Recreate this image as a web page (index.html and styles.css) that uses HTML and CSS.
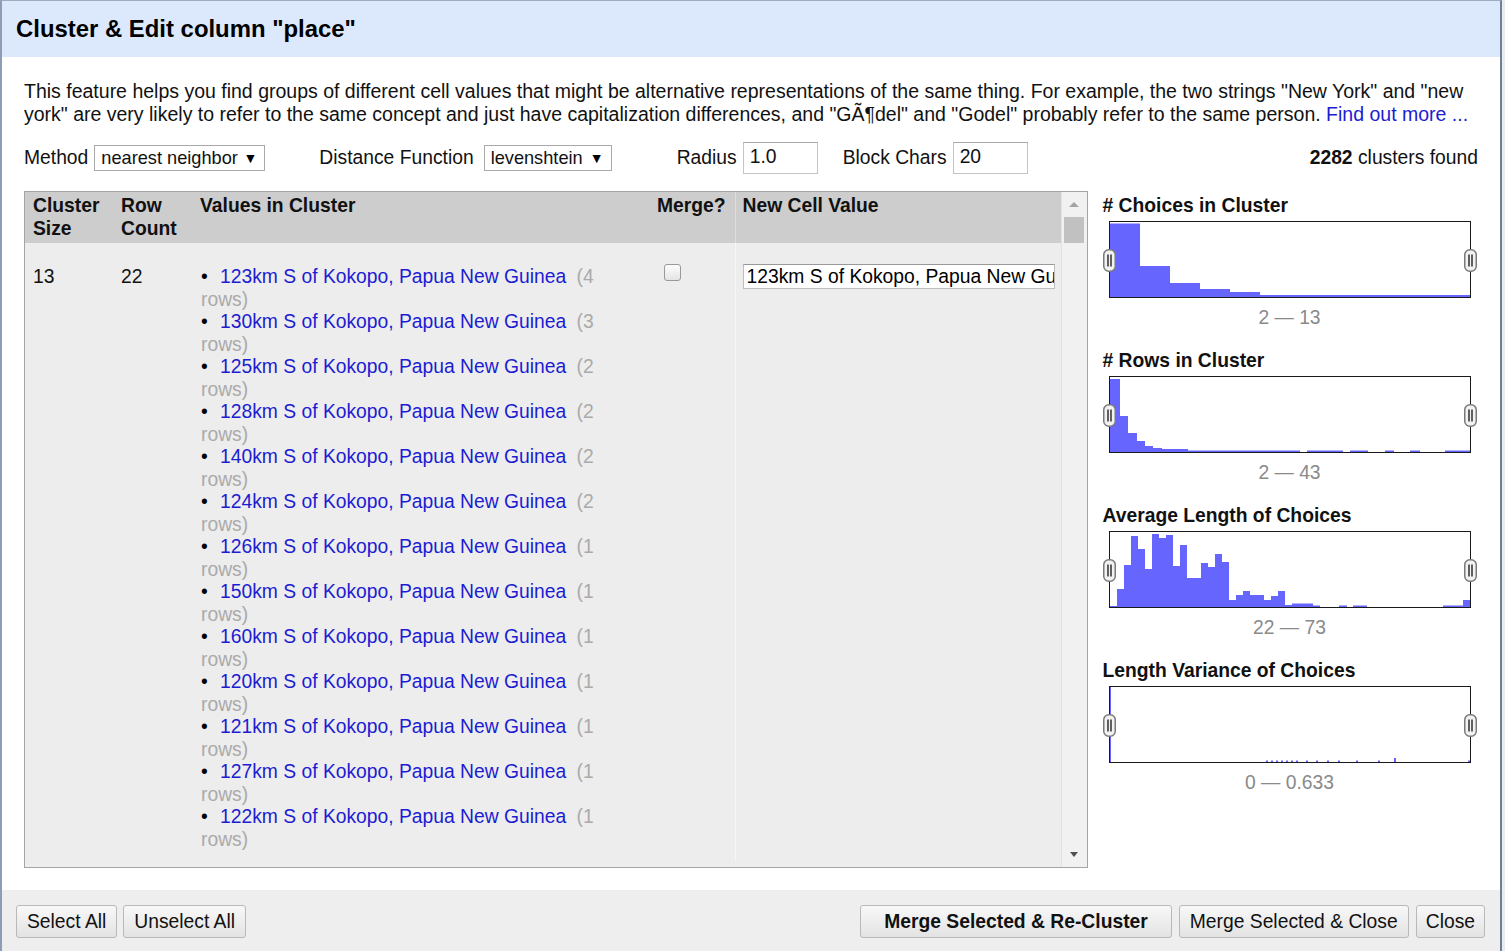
FILE: index.html
```html
<!DOCTYPE html>
<html>
<head>
<meta charset="utf-8">
<title>Cluster &amp; Edit</title>
<link rel="stylesheet" href="styles.css">
</head>
<body>
<div class="dialog">
  <div class="dlg-header">Cluster &amp; Edit column "place"</div>
  <div class="dlg-body">
    <p class="intro">This feature helps you find groups of different cell values that might be alternative representations of the same thing. For example, the two strings "New York" and "new york" are very likely to refer to the same concept and just have capitalization differences, and "GÃ¶del" and "Godel" probably refer to the same person. <a class="link" href="#">Find out more ...</a></p>
    <div class="controls">
      <span class="lbl">Method</span>
      <span class="fake-select sel-method">nearest neighbor <span class="arrow">▼</span></span>
      <span class="lbl lbl-dist">Distance Function</span>
      <span class="fake-select sel-dist">levenshtein <span class="arrow">▼</span></span>
      <span class="lbl lbl-radius">Radius</span>
      <span class="fake-input">1.0</span>
      <span class="lbl lbl-block">Block Chars</span>
      <span class="fake-input">20</span>
      <span class="found"><b>2282</b> clusters found</span>
    </div>
    <div class="main">
      <div class="grid-box">
        <div class="grid-scroll">
          <table class="grid">
            <colgroup>
              <col class="c1"><col class="c2"><col class="c3"><col class="c4"><col class="c5">
            </colgroup>
            <thead>
              <tr>
                <th>Cluster Size</th>
                <th>Row Count</th>
                <th>Values in Cluster</th>
                <th class="th-merge">Merge?</th>
                <th class="th-new">New Cell Value</th>
              </tr>
            </thead>
            <tbody>
              <tr>
                <td>13</td>
                <td>22</td>
                <td>
                  <ul class="values">
                    <li><a href="#">123km S of Kokopo, Papua New Guinea</a> <span class="cnt">(4 rows)</span></li>
                    <li><a href="#">130km S of Kokopo, Papua New Guinea</a> <span class="cnt">(3 rows)</span></li>
                    <li><a href="#">125km S of Kokopo, Papua New Guinea</a> <span class="cnt">(2 rows)</span></li>
                    <li><a href="#">128km S of Kokopo, Papua New Guinea</a> <span class="cnt">(2 rows)</span></li>
                    <li><a href="#">140km S of Kokopo, Papua New Guinea</a> <span class="cnt">(2 rows)</span></li>
                    <li><a href="#">124km S of Kokopo, Papua New Guinea</a> <span class="cnt">(2 rows)</span></li>
                    <li><a href="#">126km S of Kokopo, Papua New Guinea</a> <span class="cnt">(1 rows)</span></li>
                    <li><a href="#">150km S of Kokopo, Papua New Guinea</a> <span class="cnt">(1 rows)</span></li>
                    <li><a href="#">160km S of Kokopo, Papua New Guinea</a> <span class="cnt">(1 rows)</span></li>
                    <li><a href="#">120km S of Kokopo, Papua New Guinea</a> <span class="cnt">(1 rows)</span></li>
                    <li><a href="#">121km S of Kokopo, Papua New Guinea</a> <span class="cnt">(1 rows)</span></li>
                    <li><a href="#">127km S of Kokopo, Papua New Guinea</a> <span class="cnt">(1 rows)</span></li>
                    <li><a href="#">122km S of Kokopo, Papua New Guinea</a> <span class="cnt">(1 rows)</span></li>
                  </ul>
                </td>
                <td class="td-merge"><span class="checkbox"></span></td>
                <td class="td-new"><span class="cell-input">123km S of Kokopo, Papua New Guinea</span></td>
              </tr>
            </tbody>
          </table>
        </div>
        <div class="scrollbar">
          <div class="sb-top"><span class="tri-up"></span></div>
          <div class="sb-thumb"></div>
          <div class="sb-track"></div>
          <div class="sb-bottom"><span class="tri-down"></span></div>
        </div>
      </div>

      <div class="facets">
        <div class="facet">
          <div class="facet-title"># Choices in Cluster</div>
          <div class="chart">
            <svg width="360" height="75" viewBox="0 0 360 75">
              <g fill="#6666ff">
                <rect x="0" y="1.5" width="30" height="73.5"/>
                <rect x="30" y="44" width="30" height="31"/>
                <rect x="60" y="61" width="30" height="14"/>
                <rect x="90" y="67" width="30" height="8"/>
                <rect x="120" y="70" width="30" height="5"/>
                <rect x="150" y="73" width="210" height="2"/>
              </g>
            </svg>
            <span class="handle h-left"><svg width="13" height="23" viewBox="0 0 13 23"><rect x="0.75" y="0.75" width="11.5" height="21.5" rx="5" fill="#f2f2f2" stroke="#7a7a7a" stroke-width="1.5"/><path d="M5 5.5v12M8 5.5v12" stroke="#111" stroke-width="1.3"/></svg></span>
            <span class="handle h-right"><svg width="13" height="23" viewBox="0 0 13 23"><rect x="0.75" y="0.75" width="11.5" height="21.5" rx="5" fill="#f2f2f2" stroke="#7a7a7a" stroke-width="1.5"/><path d="M5 5.5v12M8 5.5v12" stroke="#111" stroke-width="1.3"/></svg></span>
          </div>
          <div class="range">2 — 13</div>
        </div>

        <div class="facet">
          <div class="facet-title"># Rows in Cluster</div>
          <div class="chart">
            <svg width="360" height="75" viewBox="0 0 360 75">
              <g fill="#6666ff">
                <rect x="0" y="2" width="10" height="73"/>
                <rect x="10" y="39" width="8" height="36"/>
                <rect x="18" y="56" width="9" height="19"/>
                <rect x="27" y="64" width="8" height="11"/>
                <rect x="35" y="69" width="8" height="6"/>
                <rect x="43" y="71" width="9" height="4"/>
                <rect x="52" y="72" width="26" height="3"/>
                <rect x="78" y="73.5" width="112" height="1.5"/>
                <rect x="197" y="73.5" width="36" height="1.5"/>
                <rect x="240" y="73.5" width="18" height="1.5"/>
                <rect x="275" y="73.5" width="9" height="1.5"/>
                <rect x="300" y="73.5" width="10" height="1.5"/>
                <rect x="335" y="73.5" width="25" height="1.5"/>
              </g>
            </svg>
            <span class="handle h-left"><svg width="13" height="23" viewBox="0 0 13 23"><rect x="0.75" y="0.75" width="11.5" height="21.5" rx="5" fill="#f2f2f2" stroke="#7a7a7a" stroke-width="1.5"/><path d="M5 5.5v12M8 5.5v12" stroke="#111" stroke-width="1.3"/></svg></span>
            <span class="handle h-right"><svg width="13" height="23" viewBox="0 0 13 23"><rect x="0.75" y="0.75" width="11.5" height="21.5" rx="5" fill="#f2f2f2" stroke="#7a7a7a" stroke-width="1.5"/><path d="M5 5.5v12M8 5.5v12" stroke="#111" stroke-width="1.3"/></svg></span>
          </div>
          <div class="range">2 — 43</div>
        </div>

        <div class="facet">
          <div class="facet-title">Average Length of Choices</div>
          <div class="chart">
            <svg width="360" height="75" viewBox="0 0 360 75">
              <g fill="#6666ff">
                <rect x="0" y="74" width="7" height="1"/>
                <rect x="7" y="57" width="7" height="18"/>
                <rect x="14" y="33" width="7" height="42"/>
                <rect x="21" y="4" width="7" height="71"/>
                <rect x="28" y="17" width="7" height="58"/>
                <rect x="35" y="37" width="7" height="38"/>
                <rect x="42" y="2" width="7" height="73"/>
                <rect x="49" y="6" width="7" height="69"/>
                <rect x="56" y="3" width="7" height="72"/>
                <rect x="63" y="34" width="7" height="41"/>
                <rect x="70" y="13" width="7" height="62"/>
                <rect x="77" y="46" width="7" height="29"/>
                <rect x="84" y="46" width="7" height="29"/>
                <rect x="91" y="31" width="7" height="44"/>
                <rect x="98" y="35" width="7" height="40"/>
                <rect x="105" y="22" width="7" height="53"/>
                <rect x="112" y="30" width="7" height="45"/>
                <rect x="119" y="68" width="7" height="7"/>
                <rect x="126" y="63" width="7" height="12"/>
                <rect x="133" y="59" width="7" height="16"/>
                <rect x="140" y="63" width="7" height="12"/>
                <rect x="147" y="63" width="7" height="12"/>
                <rect x="154" y="68" width="7" height="7"/>
                <rect x="161" y="64" width="7" height="11"/>
                <rect x="168" y="59" width="7" height="16"/>
                <rect x="175" y="73" width="7" height="2"/>
                <rect x="182" y="71.5" width="21" height="3.5"/>
                <rect x="203" y="73.5" width="7" height="1.5"/>
                <rect x="229" y="73.5" width="8" height="1.5"/>
                <rect x="243" y="73.5" width="14" height="1.5"/>
                <rect x="333" y="73.5" width="20" height="1.5"/>
                <rect x="353" y="68" width="7" height="7"/>
              </g>
            </svg>
            <span class="handle h-left"><svg width="13" height="23" viewBox="0 0 13 23"><rect x="0.75" y="0.75" width="11.5" height="21.5" rx="5" fill="#f2f2f2" stroke="#7a7a7a" stroke-width="1.5"/><path d="M5 5.5v12M8 5.5v12" stroke="#111" stroke-width="1.3"/></svg></span>
            <span class="handle h-right"><svg width="13" height="23" viewBox="0 0 13 23"><rect x="0.75" y="0.75" width="11.5" height="21.5" rx="5" fill="#f2f2f2" stroke="#7a7a7a" stroke-width="1.5"/><path d="M5 5.5v12M8 5.5v12" stroke="#111" stroke-width="1.3"/></svg></span>
          </div>
          <div class="range">22 — 73</div>
        </div>

        <div class="facet">
          <div class="facet-title">Length Variance of Choices</div>
          <div class="chart">
            <svg width="360" height="75" viewBox="0 0 360 75">
              <g fill="#6666ff">
                <rect x="0" y="0" width="1" height="75"/>
                <rect x="156" y="73.5" width="2" height="1.5"/>
                <rect x="161" y="73.5" width="2" height="1.5"/>
                <rect x="166" y="73.5" width="2" height="1.5"/>
                <rect x="171" y="73.5" width="2" height="1.5"/>
                <rect x="176" y="73.5" width="2" height="1.5"/>
                <rect x="181" y="73.5" width="2" height="1.5"/>
                <rect x="186" y="73.5" width="2" height="1.5"/>
                <rect x="196" y="73.5" width="2" height="1.5"/>
                <rect x="206" y="73.5" width="2" height="1.5"/>
                <rect x="217" y="73.5" width="2" height="1.5"/>
                <rect x="228" y="73.5" width="2" height="1.5"/>
                <rect x="246" y="73.5" width="2" height="1.5"/>
                <rect x="268" y="73.5" width="2" height="1.5"/>
                <rect x="284" y="71" width="2" height="4"/>
                <rect x="358" y="73.5" width="2" height="1.5"/>
              </g>
            </svg>
            <span class="handle h-left"><svg width="13" height="23" viewBox="0 0 13 23"><rect x="0.75" y="0.75" width="11.5" height="21.5" rx="5" fill="#f2f2f2" stroke="#7a7a7a" stroke-width="1.5"/><path d="M5 5.5v12M8 5.5v12" stroke="#111" stroke-width="1.3"/></svg></span>
            <span class="handle h-right"><svg width="13" height="23" viewBox="0 0 13 23"><rect x="0.75" y="0.75" width="11.5" height="21.5" rx="5" fill="#f2f2f2" stroke="#7a7a7a" stroke-width="1.5"/><path d="M5 5.5v12M8 5.5v12" stroke="#111" stroke-width="1.3"/></svg></span>
          </div>
          <div class="range">0 — 0.633</div>
        </div>
      </div>
    </div>
  </div>
  <div class="dlg-footer">
    <div class="btn-group">
      <span class="btn">Select All</span>
      <span class="btn">Unselect All</span>
    </div>
    <div class="btn-group">
      <span class="btn btn-bold">Merge Selected &amp; Re-Cluster</span>
      <span class="btn">Merge Selected &amp; Close</span>
      <span class="btn btn-close">Close</span>
    </div>
  </div>
</div>
</body>
</html>
```

FILE: styles.css
```css
* { box-sizing: border-box; }
html, body { margin: 0; padding: 0; }
body {
  background: #e9ecef;
  font-family: "Liberation Sans", Arial, sans-serif;
  font-size: 19.3px;
  color: #111;
  width: 1505px;
  height: 951px;
  overflow: hidden;
}
.dialog {
  width: 1502px;
  height: 951px;
  background: #fff;
  border-left: 2px solid #8d9db5;
  border-right: 2px solid #6f7f96;
  border-top: 1px solid #9eacc0;
  display: flex;
  flex-direction: column;
}
.dlg-header {
  height: 56px;
  background: #dce9fc;
  font-weight: bold;
  font-size: 23.9px;
  padding: 14px 0 0 14px;
  color: #000;
}
.dlg-body {
  flex: 1;
  padding: 23px 22px 0 22px;
}
.intro {
  margin: 0;
  line-height: 23px;
  font-size: 19.5px;
  color: #111;
}
.link, .link:visited { color: #1c1cd2; text-decoration: none; }
.controls {
  display: flex;
  align-items: center;
  height: 32px;
  margin-top: 16px;
}
.lbl { white-space: nowrap; }
.fake-select {
  display: inline-flex;
  align-items: center;
  height: 26px;
  border: 1px solid #a9a9a9;
  background: #fff;
  padding: 0 7px 0 6px;
  font-size: 18.2px;
  white-space: nowrap;
}
.fake-select .arrow { font-size: 14px; margin-left: auto; color: #000; }
.sel-method { margin-left: 6px; width: 171px; }
.lbl-dist { margin-left: 54px; }
.sel-dist { margin-left: 10px; width: 128px; }
.lbl-radius { margin-left: 65px; }
.lbl-block { margin-left: 25px; }
.fake-input {
  display: inline-block;
  width: 75px;
  height: 32px;
  margin-left: 6px;
  border: 1px solid #c4c4c4;
  border-top-color: #a9a9a9;
  padding: 3px 6px;
  background: #fff;
}
.found { margin-left: auto; }
.found b { font-weight: bold; }

.main {
  display: flex;
  align-items: flex-start;
  margin-top: 17px;
}
.grid-box {
  width: 1065px;
  height: 677px;
  border: 1px solid #a5a5a5;
  display: flex;
  background: #ededed;
  overflow: hidden;
}
.grid-scroll {
  width: 1037px;
  height: 100%;
  overflow: hidden;
}
.grid {
  border-collapse: collapse;
  table-layout: fixed;
  width: 1037px;
}
.c1 { width: 86px; }
.c2 { width: 81px; }
.c3 { width: 457px; }
.c4 { width: 86px; }
.c5 { width: 327px; }
.grid th {
  background: #cdcdcd;
  font-weight: bold;
  text-align: left;
  vertical-align: top;
  height: 51px;
  padding: 2px 4px 0 8px;
  line-height: 23px;
  color: #111;
}
.grid th:nth-child(2) { padding-left: 10px; }
.grid th.th-merge { text-align: right; padding-right: 9px; }
.grid th.th-new { border-left: 1px solid #dedede; padding-left: 7px; }
.grid td {
  vertical-align: top;
  padding: 23px 4px 10px 8px;
  line-height: 22.5px;
}
.grid td:nth-child(2) { padding-left: 10px; }
.grid td:nth-child(3) { padding-left: 9px; padding-right: 18px; }
.grid td.td-merge { padding-left: 15px; padding-top: 22px; }
.grid td.td-new { border-left: 1px solid #f6f6f6; padding-left: 7px; padding-right: 7px; padding-top: 22px; }
.values { list-style: none; margin: 0; padding: 0; }
.values li::before {
  content: "•";
  display: inline-block;
  width: 19px;
  padding-left: 0;
  color: #000;
}
.values a, .values a:visited { color: #1c1cd2; text-decoration: none; }
.cnt { color: #aaaaaa; padding-left: 5px; }
.checkbox {
  display: block;
  width: 17px;
  height: 17px;
  margin-top: -1px;
  border: 1px solid #999;
  border-radius: 3px;
  background: linear-gradient(#fdfdfd, #e4e4e4);
}
.cell-input {
  display: block;
  width: 312px;
  height: 25px;
  background: #fff;
  border: 1px solid #bdbdbd;
  border-top-color: #999;
  padding: 0 4px 0 3px;
  line-height: 23px;
  white-space: nowrap;
  overflow: hidden;
  margin-top: -1px;
  color: #000;
}
.scrollbar {
  width: 26px;
  height: 100%;
  background: #f1f1f1;
  border-left: 1px solid #e2e2e2;
  display: flex;
  flex-direction: column;
  align-items: center;
}
.sb-top, .sb-bottom {
  height: 25px;
  width: 100%;
  display: flex;
  align-items: center;
  justify-content: center;
}
.tri-up {
  width: 0; height: 0;
  border-left: 5px solid transparent;
  border-right: 5px solid transparent;
  border-bottom: 5px solid #a3a3a3;
}
.tri-down {
  width: 0; height: 0;
  border-left: 4px solid transparent;
  border-right: 4px solid transparent;
  border-top: 5px solid #505050;
}
.sb-thumb {
  width: 20px;
  height: 26px;
  background: #c1c1c1;
}
.sb-track { flex: 1; }

.facets {
  margin-left: 15px;
  width: 376px;
}
.facet {
  padding-top: 3px;
  height: 155px;
}
.facet-title {
  font-weight: bold;
  line-height: 23px;
  color: #111;
  white-space: nowrap;
}
.chart {
  position: relative;
  margin: 4px 0 0 6px;
  width: 362px;
  height: 77px;
  border: 1px solid #1a1a1a;
  background: #fff;
}
.chart > svg { display: block; }
.handle {
  position: absolute;
  top: 27px;
  width: 13px;
  height: 23px;
}
.handle svg { display: block; }
.h-left { left: -7px; }
.h-right { right: -7px; }
.range {
  width: 362px;
  margin-left: 6px;
  margin-top: 8px;
  text-align: center;
  color: #8a8a8a;
  line-height: 23px;
}

.dlg-footer {
  height: 61px;
  background: #eeeeee;
  display: flex;
  justify-content: space-between;
  align-items: flex-start;
  padding: 15px 15px 0 14px;
}
.btn-group { display: flex; gap: 7px; }
.btn-group:first-child { gap: 6px; }
.btn {
  display: inline-block;
  height: 33px;
  line-height: 31px;
  padding: 0 10px;
  border: 1px solid #b9b9b9;
  border-radius: 3px;
  background: linear-gradient(#f8f8f8, #e3e3e3);
  color: #111;
  white-space: nowrap;
}
.btn-close { padding: 0 9px; }
.btn-bold { font-weight: bold; padding: 0 23px; }
```
